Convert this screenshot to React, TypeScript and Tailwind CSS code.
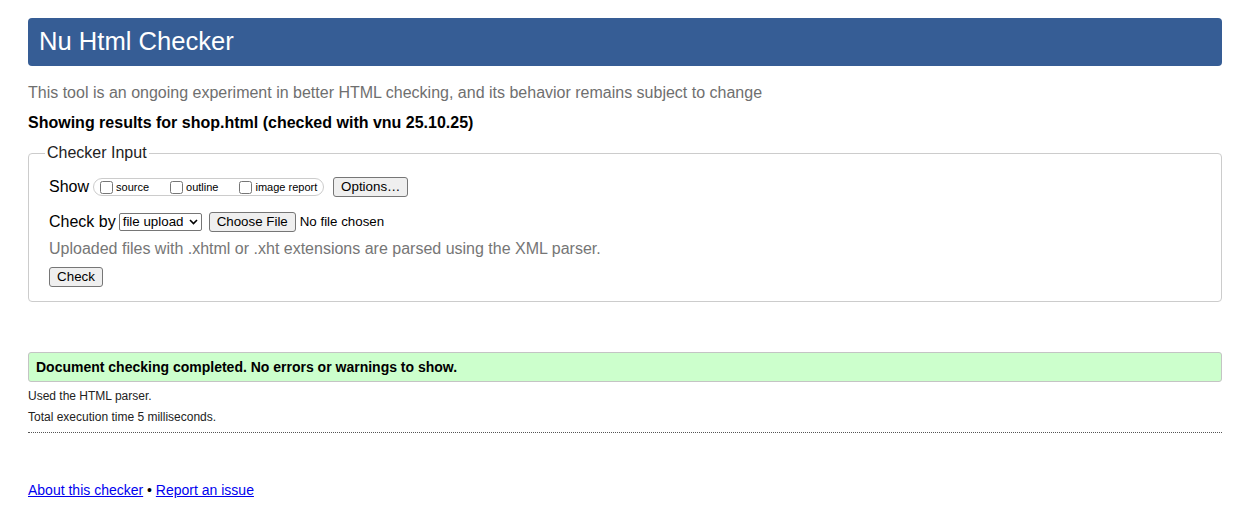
import React from "react";

function Btn({ children, className = "" }: { children: React.ReactNode; className?: string }) {
  return (
    <button
      type="button"
      className={
        "inline-flex items-center justify-center h-[20px] px-[6px] bg-[#efefef] border border-[#767676] rounded-[3px] text-[13.33px] leading-none text-black " +
        className
      }
    >
      {children}
    </button>
  );
}

function Check({ label }: { label: string }) {
  return (
    <label className="inline-flex items-center">
      <input type="checkbox" className="w-[13px] h-[13px] m-0" />
      <span className="ml-[3px] text-[11px] leading-none">{label}</span>
    </label>
  );
}

export default function App() {
  return (
    <div
      className="bg-white text-black px-[28px] pt-[18px] pb-[20px] w-[1250px]"
      style={{ fontFamily: '"Liberation Sans", Arial, sans-serif' }}
    >
      <div className="w-[1194px]">
        <header className="h-[48px] bg-[#365d95] rounded-[4px] flex items-center pl-[11px]">
          <h1 className="text-white text-[25.6px] leading-none font-normal">Nu Html Checker</h1>
        </header>

        <p className="mt-[18px] text-[16px] leading-[18px] text-[#6f6f6f]">
          This tool is an ongoing experiment in better HTML checking, and its behavior remains subject to change
        </p>

        <p className="mt-[12px] text-[16px] leading-[18px] font-bold text-black">
          Showing results for shop.html (checked with vnu 25.10.25)
        </p>

        <fieldset className="mt-[12px] border border-[#cccccc] rounded-[4px] px-[20px] pb-[13px]">
          <legend className="ml-[-4px] px-[2px] text-[16px] leading-[18px] text-[#222]">Checker Input</legend>

          <div className="mt-[14px] flex items-center h-[22px] text-[16px]">
            <span>Show</span>
            <div className="ml-[4px] inline-flex items-center h-[18px] border border-[#cccccc] rounded-[9px] pl-[6px] pr-[6px] gap-[21px]">
              <Check label="source" />
              <Check label="outline" />
              <Check label="image report" />
            </div>
            <Btn className="ml-[9px] w-[75px]">Options…</Btn>
          </div>

          <div className="mt-[13px] flex items-center h-[22px] text-[16px]">
            <span>Check by</span>
            <span className="ml-[3px] inline-flex items-center justify-between h-[18px] w-[83px] border border-[#767676] rounded-[2px] pl-[3px] pr-[3px] text-[13.33px] leading-none">
              file upload
              <svg width="9" height="6" viewBox="0 0 9 6" className="ml-[2px]">
                <path d="M1 1 L4.5 4.5 L8 1" stroke="#000" strokeWidth="1.6" fill="none" />
              </svg>
            </span>
            <Btn className="ml-[7px] w-[87px]">Choose File</Btn>
            <span className="ml-[4px] text-[13.33px]">No file chosen</span>
          </div>

          <p className="mt-[7px] text-[16px] leading-[18px] text-[#767676]">
            Uploaded files with .xhtml or .xht extensions are parsed using the XML parser.
          </p>

          <div className="mt-[6px]">
            <Btn className="w-[54px]">Check</Btn>
          </div>
        </fieldset>

        <div className="mt-[50px] h-[30px] bg-[#ccffcc] border border-[#c4c4c4] rounded-[3px] flex items-center pl-[7px]">
          <span className="text-[14px] font-bold leading-none">
            Document checking completed. No errors or warnings to show.
          </span>
        </div>

        <p className="mt-[7px] text-[12px] leading-[14px] text-[#222]">Used the HTML parser.</p>
        <p className="mt-[7px] text-[12px] leading-[14px] text-[#222]">Total execution time 5 milliseconds.</p>
        <div className="mt-[8px] border-b border-dotted border-[#555]" />

        <p className="mt-[49px] text-[14px] leading-[16px]">
          <a href="#" className="text-[#0000ee] underline">About this checker</a>
          <span> • </span>
          <a href="#" className="text-[#0000ee] underline">Report an issue</a>
        </p>
      </div>
    </div>
  );
}
